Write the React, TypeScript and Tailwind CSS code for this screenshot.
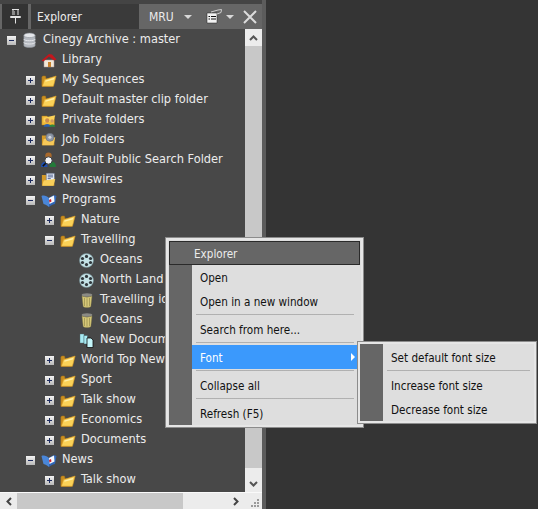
import React from "react";

const font = { fontFamily: '"DejaVu Sans", sans-serif' };
const ic = "flex-none";

function Folder() {
  return (
    <svg className={ic} width="16" height="15" viewBox="0 0 18 16">
      <path d="M1 4 L1 14.5 L13 14.5 L14 7 L6 7 L5 3 L2 3 Z" fill="#c98f1e" stroke="#a8741a" strokeWidth="0.6" />
      <path d="M4 7 L17 3 L14 14.5 L1.5 14.5 Z" fill="#fbd258" stroke="#d99a26" strokeWidth="0.7" />
      <path d="M5 8 L15 5 L14.5 7 L5 9.5 Z" fill="#fff0a8" />
    </svg>
  );
}
function Db() {
  return (
    <svg className={ic} width="15" height="17" viewBox="0 0 16 18">
      <path d="M2 3.5 V14.5 C2 17 14 17 14 14.5 V3.5 Z" fill="#b5b9c0" stroke="#8a8f96" strokeWidth="0.6" />
      <ellipse cx="8" cy="3.5" rx="6" ry="2.4" fill="#e4e6ea" stroke="#8a8f96" strokeWidth="0.6" />
      <path d="M2 7.5 C2 9.8 14 9.8 14 7.5 M2 11 C2 13.3 14 13.3 14 11" fill="none" stroke="#e8eaee" strokeWidth="1" />
    </svg>
  );
}
function Home() {
  return (
    <svg className={ic} width="16" height="15" viewBox="0 0 16 15">
      <path d="M3 7 H13 V14 H3 Z" fill="#f2e8d8" stroke="#a99" strokeWidth="0.5" />
      <path d="M7 9 H10 V14 H7 Z" fill="#c8812c" />
      <path d="M0.5 7.5 L8 1 L11 1.5 L15.5 6.5 L13 7.5 L8 3.5 L2.5 8.5 Z" fill="#c4161c" />
    </svg>
  );
}
function Private() {
  return (
    <svg className={ic} width="16" height="15" viewBox="0 0 18 16">
      <path d="M1 3 H7 L8 5 H15 V13 H1 Z" fill="#f0b93c" stroke="#b07f1c" strokeWidth="0.5" />
      <path d="M3 5 L16 2 L14 9 L3 10 Z" fill="#fbd258" />
      <circle cx="7" cy="8" r="2.4" fill="#c98a50" />
      <path d="M3 15 C3 11 11 11 11 15 Z" fill="#2a5fb0" />
      <circle cx="12.5" cy="8.5" r="2" fill="#d09a60" />
      <path d="M9.5 15 C9.5 11.5 16 11.5 16 15 Z" fill="#2f8a3c" />
    </svg>
  );
}
function Job() {
  return (
    <svg className={ic} width="16" height="16" viewBox="0 0 18 16">
      <path d="M1 3 H7 L8 5 H15 V14 H1 Z" fill="#d49a28" />
      <path d="M3 7 L16 5 L14 14 L1.5 14 Z" fill="#f6c858" />
      <circle cx="10" cy="5" r="4.5" fill="#8e97a6" stroke="#5e6672" strokeWidth="0.6" />
      <circle cx="10" cy="5" r="1.7" fill="#d4d8de" />
    </svg>
  );
}
function SearchFolder() {
  return (
    <svg className={ic} width="17" height="16" viewBox="0 0 18 17">
      <circle cx="9" cy="4" r="3.4" fill="#a8692c" />
      <path d="M1 16 C1 9 8 9 8 16 Z" fill="#1f4fb0" />
      <path d="M10 16 C10 9 17 9 17 16 Z" fill="#237a3a" />
      <circle cx="9" cy="9" r="3.9" fill="#f4f6fa" stroke="#30343a" strokeWidth="1" />
      <path d="M6 12 L3 15" stroke="#111" strokeWidth="1.6" />
    </svg>
  );
}
function News() {
  return (
    <svg className={ic} width="16" height="16" viewBox="0 0 18 17">
      <path d="M1 3 H7 L8 5 H15 V15 H1 Z" fill="#d49a28" />
      <path d="M6 1 H15 V10 H6 Z" fill="#eef3fa" stroke="#5a6c90" strokeWidth="0.6" />
      <path d="M7.5 3 H13.5 M7.5 5 H13.5 M7.5 7 H11" stroke="#3a4c80" strokeWidth="1" />
      <path d="M3 9 L16 7.5 L14 15 L1.5 15 Z" fill="#f8cf5a" />
    </svg>
  );
}
function Book() {
  return (
    <svg className={ic} width="16" height="15" viewBox="0 0 16 15">
      <path d="M0.5 3 C3 2 6 3 8 5 V14 C6 12 3 11 2.5 11 Z" fill="#4a86d8" />
      <path d="M15.5 3 C13 1 10 3 8 5 V14 C10 12 13 11 14 11 Z" fill="#2f66b8" />
      <path d="M8 5 L13 2.5 L13.5 8.5 L8.5 11 Z" fill="#f6f8fc" />
      <path d="M8 7 L10 6 L10.5 8.5 L8.5 9.5 Z" fill="#d0202a" />
    </svg>
  );
}
function Reel() {
  return (
    <svg className={ic} width="15" height="15" viewBox="0 0 15 15">
      <circle cx="7.5" cy="7.5" r="7" fill="#c4e2e6" stroke="#6f8a90" strokeWidth="0.6" />
      <circle cx="7.5" cy="3.4" r="1.6" fill="#30383c" />
      <circle cx="7.5" cy="11.6" r="1.6" fill="#30383c" />
      <circle cx="3.5" cy="5.5" r="1.6" fill="#30383c" />
      <circle cx="11.5" cy="5.5" r="1.6" fill="#30383c" />
      <circle cx="3.5" cy="9.5" r="1.6" fill="#30383c" />
      <circle cx="11.5" cy="9.5" r="1.6" fill="#30383c" />
    </svg>
  );
}
function Trash() {
  return (
    <svg className={ic} width="12" height="15" viewBox="0 0 12 15">
      <ellipse cx="6" cy="2" rx="5.3" ry="1.8" fill="#8a8a84" />
      <path d="M1 3 L2.2 13.5 C3 14.8 9 14.8 9.8 13.5 L11 3 C9 4.5 3 4.5 1 3 Z" fill="#d6c878" stroke="#8c8446" strokeWidth="0.4" />
      <path d="M3.5 5 V13 M6 5.3 V13.5 M8.5 5 V13" stroke="#9a9050" strokeWidth="0.8" />
    </svg>
  );
}
function Docs() {
  return (
    <svg className={ic} width="15" height="15" viewBox="0 0 15 15">
      <path d="M1 1 H5 V10 H1 Z" fill="#a8ecf4" stroke="#4e6a70" strokeWidth="0.4" />
      <path d="M5 2.5 H8.5 V11 H5 Z" fill="#a8ecf4" stroke="#30484e" strokeWidth="0.4" />
      <path d="M8 5 H12 L14 7 V14.5 H8 Z" fill="#c4f6fa" stroke="#101010" strokeWidth="0.8" />
    </svg>
  );
}

function Exp({ open }: { open?: boolean }) {
  return (
    <span className="relative flex h-[9px] w-[9px] shrink-0 items-center justify-center bg-gradient-to-b from-[#f4f4f4] to-[#b8b8b8]">
      <span className="h-px w-[5px] bg-[#1d2b5e]" />
      {!open && <span className="absolute h-[5px] w-px bg-[#1d2b5e]" />}
    </span>
  );
}

type Row = { level: number; label: string; icon: React.ReactNode; exp?: "open" | "closed" };
const rows: Row[] = [
  { level: 0, label: "Cinegy Archive : master", icon: <Db />, exp: "open" },
  { level: 1, label: "Library", icon: <Home /> },
  { level: 1, label: "My Sequences", icon: <Folder />, exp: "closed" },
  { level: 1, label: "Default master clip folder", icon: <Folder />, exp: "closed" },
  { level: 1, label: "Private folders", icon: <Private />, exp: "closed" },
  { level: 1, label: "Job Folders", icon: <Job />, exp: "closed" },
  { level: 1, label: "Default Public Search Folder", icon: <SearchFolder />, exp: "closed" },
  { level: 1, label: "Newswires", icon: <News />, exp: "closed" },
  { level: 1, label: "Programs", icon: <Book />, exp: "open" },
  { level: 2, label: "Nature", icon: <Folder />, exp: "closed" },
  { level: 2, label: "Travelling", icon: <Folder />, exp: "open" },
  { level: 3, label: "Oceans", icon: <Reel /> },
  { level: 3, label: "North Land", icon: <Reel /> },
  { level: 3, label: "Travelling idea", icon: <Trash /> },
  { level: 3, label: "Oceans", icon: <Trash /> },
  { level: 3, label: "New Document", icon: <Docs /> },
  { level: 2, label: "World Top News", icon: <Folder />, exp: "closed" },
  { level: 2, label: "Sport", icon: <Folder />, exp: "closed" },
  { level: 2, label: "Talk show", icon: <Folder />, exp: "closed" },
  { level: 2, label: "Economics", icon: <Folder />, exp: "closed" },
  { level: 2, label: "Documents", icon: <Folder />, exp: "closed" },
  { level: 1, label: "News", icon: <Book />, exp: "open" },
  { level: 2, label: "Talk show", icon: <Folder />, exp: "closed" },
];

const indent = ["w-[7px]", "w-[26px]", "w-[45px]", "w-[64px]"];

function TreeRow({ r }: { r: Row }) {
  return (
    <div className="flex h-5 items-center whitespace-nowrap text-[12.7px] text-[#ececec] [font-stretch:condensed]">
      <span className={"shrink-0 " + indent[r.level]} />
      <span className="flex w-[9px] shrink-0 items-center">{r.exp && <Exp open={r.exp === "open"} />}</span>
      <span className="flex w-[27px] shrink-0 items-center justify-center">{r.icon}</span>
      <span className="pb-[2px]">{r.label}</span>
    </div>
  );
}

function MenuItem({ label, active, arrow }: { label: string; active?: boolean; arrow?: boolean }) {
  return (
    <div className={"relative flex h-6 items-center pl-2 pt-[3px] text-[11.6px] [font-stretch:condensed] " + (active ? "bg-[#3b99fc] text-white" : "text-[#111]")}>
      {label}
      {arrow && <span className="absolute right-[3px] top-[8px] h-0 w-0 border-y-[4px] border-l-[4px] border-y-transparent border-l-white" />}
    </div>
  );
}
function Sep() {
  return <div className="mx-1 my-px h-[2px] bg-gradient-to-b from-[#9a9a9a] to-[#f6f6f6]" />;
}

export default function App() {
  return (
    <div className="relative flex h-[509px] w-[538px] overflow-hidden bg-[#343434]" style={font}>
      <div className="flex w-[262px] shrink-0 flex-col bg-[#444444] pt-1">
        <div className="flex h-[25px] shrink-0 items-stretch bg-[#666666] text-[12px] text-[#ececec] [font-stretch:condensed]">
          <div className="ml-[2px] flex w-[26px] items-center justify-center bg-[#333333]">
            <svg className="flex-none" width="11" height="15" viewBox="0 0 11 15" fill="none" stroke="#e4e4e4" strokeWidth="1">
              <path d="M2 0.5 H9 M3 0.5 V6 M8 0.5 V6 M0.5 7.5 H10.5 V8.5 H0.5 Z M5.5 9 V14.5" />
              <path d="M4.5 2 V6" stroke="#888" />
            </svg>
          </div>
          <div className="ml-[3px] flex w-[108px] items-center bg-[#3a3a3a] pl-[6px] pt-px">Explorer</div>
          <div className="ml-[10px] flex items-center pt-px">MRU</div>
          <span className="ml-[10px] mt-[11px] h-0 w-0 border-x-[4px] border-t-[4px] border-x-transparent border-t-[#d8d8d8]" />
          <span className="ml-[14px] flex items-center">
            <svg className="flex-none" width="17" height="15" viewBox="0 0 17 15">
              <path d="M1 4 H11 V14 H1 Z" fill="#f2f2f2" stroke="#222" strokeWidth="0.5" />
              <path d="M2.5 7.5 H4 M5 7.5 H10 M2.5 10 H4 M5 10 H10" stroke="#111" strokeWidth="1.2" />
              <path d="M5 3 L12 1 L15.5 0.5 L15 3.5 L11 5" fill="none" stroke="#cfcfcf" strokeWidth="1" />
            </svg>
          </span>
          <span className="ml-[3px] mt-[11px] h-0 w-0 border-x-[4px] border-t-[4px] border-x-transparent border-t-[#d8d8d8]" />
          <span className="ml-[9px] flex items-center">
            <svg className="flex-none" width="14" height="14" viewBox="0 0 14 14">
              <path d="M1 1 L13 13 M13 1 L1 13" stroke="#dcdcdc" strokeWidth="2" />
            </svg>
          </span>
        </div>
        <div className="flex min-h-0 flex-1">
          <div className="min-w-0 flex-1 overflow-hidden bg-[#484848] pt-px">
            {rows.map((r, i) => (
              <TreeRow key={i} r={r} />
            ))}
          </div>
          <div className="flex w-[17px] shrink-0 flex-col bg-[#ececec]">
            <div className="flex h-[17px] items-center justify-center">
              <svg width="9" height="6" viewBox="0 0 9 6" fill="none" stroke="#555" strokeWidth="2">
                <path d="M1 5 L4.5 1.5 L8 5" />
              </svg>
            </div>
            <div className="h-[422px] bg-[#c8c8c8]" />
            <div className="flex flex-1 items-end justify-center pb-[5px]">
              <svg width="9" height="6" viewBox="0 0 9 6" fill="none" stroke="#555" strokeWidth="2">
                <path d="M1 1 L4.5 4.5 L8 1" />
              </svg>
            </div>
          </div>
        </div>
        <div className="flex h-[17px] shrink-0 items-center border-t border-[#fafafa] bg-[#ececec]">
          <div className="flex w-[17px] items-center justify-center">
            <svg width="6" height="9" viewBox="0 0 6 9" fill="none" stroke="#444" strokeWidth="2">
              <path d="M5 1 L1.5 4.5 L5 8" />
            </svg>
          </div>
          <div className="h-full w-[166px] bg-[#c8c8c8]" />
          <div className="flex w-[62px] justify-end pr-[6px]">
            <svg width="6" height="9" viewBox="0 0 6 9" fill="none" stroke="#444" strokeWidth="2">
              <path d="M1 1 L4.5 4.5 L1 8" />
            </svg>
          </div>
          <div className="ml-auto flex w-[17px] justify-end pr-[2px] pt-[3px]">
            <svg width="10" height="10" viewBox="0 0 10 10" fill="#9a9a9a">
              <rect x="7" y="1" width="2" height="2" />
              <rect x="4" y="4" width="2" height="2" />
              <rect x="7" y="4" width="2" height="2" />
              <rect x="1" y="7" width="2" height="2" />
              <rect x="4" y="7" width="2" height="2" />
              <rect x="7" y="7" width="2" height="2" />
            </svg>
          </div>
        </div>
      </div>
      <div className="w-1 shrink-0 bg-[#5c5c5c]" />

      <div className="absolute left-[166px] top-[238px] flex h-[189px] w-[197px] flex-col border-2 border-[#e6e6e6] bg-[#dedede] shadow-[0_0_0_1px_#8c8c8c]">
        <div className="ml-px mr-px mt-px flex h-[24px] shrink-0 items-center border border-[#2a2a2a] bg-[#666666] pl-[24px] pt-[3px] text-[11.6px] text-[#ececec] [font-stretch:condensed]">
          Explorer
        </div>
        <div className="flex min-h-0 flex-1">
          <div className="ml-px w-[23px] shrink-0 bg-[#666666]" />
          <div className="flex-1 pr-[3px]">
            <MenuItem label="Open" />
            <MenuItem label="Open in a new window" />
            <Sep />
            <MenuItem label="Search from here..." />
            <Sep />
            <MenuItem label="Font" active arrow />
            <Sep />
            <MenuItem label="Collapse all" />
            <Sep />
            <MenuItem label="Refresh (F5)" />
          </div>
        </div>
      </div>

      <div className="absolute left-[358px] top-[342px] flex h-[81px] w-[178px] border-2 border-[#e6e6e6] bg-[#dedede] shadow-[0_0_0_1px_#8c8c8c]">
        <div className="w-[23px] shrink-0 bg-[#666666]" />
        <div className="flex-1 pt-px">
          <MenuItem label="Set default font size" />
          <Sep />
          <MenuItem label="Increase font size" />
          <MenuItem label="Decrease font size" />
        </div>
      </div>
    </div>
  );
}
